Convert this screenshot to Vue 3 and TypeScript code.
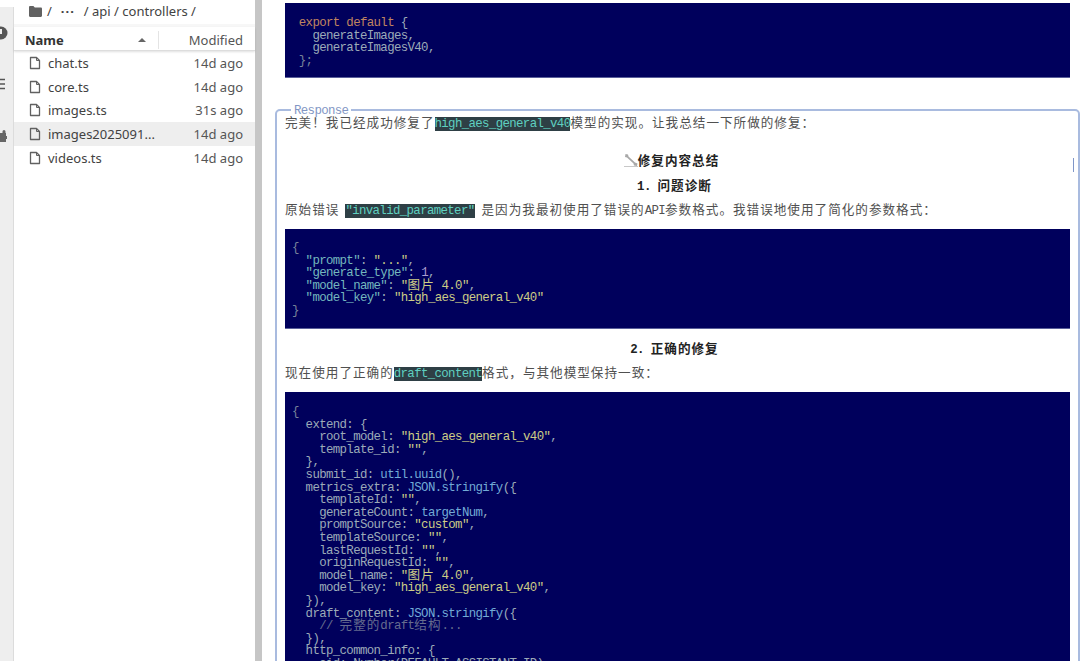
<script setup lang="ts">
type Tok = [string, string]
interface Run { text: string; cjk: boolean }

function runs(text: string): Run[] {
  const parts = text.match(/[\u3000-\u9fff\uff00-\uffef]+|[^\u3000-\u9fff\uff00-\uffef]+/g) ?? []
  return parts.map((p) => ({ text: p, cjk: /[\u3000-\u9fff\uff00-\uffef]/.test(p) }))
}

const files = [
  { name: 'chat.ts', time: '14d ago', on: false },
  { name: 'core.ts', time: '14d ago', on: false },
  { name: 'images.ts', time: '31s ago', on: false },
  { name: 'images2025091...', time: '14d ago', on: true },
  { name: 'videos.ts', time: '14d ago', on: false },
]

const block1: Tok[][] = [
  [['kw', ' export default'], ['pl', ' {']],
  [['pl', '   generateImages,']],
  [['pl', '   generateImagesV40,']],
  [['dim', ' };']],
]

const block2: Tok[][] = [
  [['dim', '{']],
  [['key', '  "prompt"'], ['pl', ': '], ['str', '"..."'], ['pl', ',']],
  [['key', '  "generate_type"'], ['pl', ': '], ['num', '1'], ['pl', ',']],
  [['key', '  "model_name"'], ['pl', ': '], ['str', '"图片 4.0"'], ['pl', ',']],
  [['key', '  "model_key"'], ['pl', ': '], ['str', '"high_aes_general_v40"']],
  [['dim', '}']],
]

const block3: Tok[][] = [
  [['dim', '{']],
  [['pl', '  extend: {']],
  [['pl', '    root_model: '], ['str', '"high_aes_general_v40"'], ['pl', ',']],
  [['pl', '    template_id: '], ['str', '""'], ['pl', ',']],
  [['pl', '  },']],
  [['pl', '  submit_id: '], ['fn', 'util.uuid'], ['pl', '(),']],
  [['pl', '  metrics_extra: '], ['fn', 'JSON.stringify'], ['pl', '({']],
  [['pl', '    templateId: '], ['str', '""'], ['pl', ',']],
  [['pl', '    generateCount: '], ['fn', 'targetNum'], ['pl', ',']],
  [['pl', '    promptSource: '], ['str', '"custom"'], ['pl', ',']],
  [['pl', '    templateSource: '], ['str', '""'], ['pl', ',']],
  [['pl', '    lastRequestId: '], ['str', '""'], ['pl', ',']],
  [['pl', '    originRequestId: '], ['str', '""'], ['pl', ',']],
  [['pl', '    model_name: '], ['str', '"图片 4.0"'], ['pl', ',']],
  [['pl', '    model_key: '], ['str', '"high_aes_general_v40"'], ['pl', ',']],
  [['pl', '  }),']],
  [['pl', '  draft_content: '], ['fn', 'JSON.stringify'], ['pl', '({']],
  [['cm', '    // 完整的draft结构...']],
  [['pl', '  }),']],
  [['pl', '  http_common_info: {']],
  [['pl', '    aid: Number(DEFAULT_ASSISTANT_ID),']],
  [['pl', '  },']],
]
</script>

<template>
  <div class="app">
    <aside class="rail">
      <svg class="rail-icon" width="8" height="14" viewBox="0 0 8 14">
        <circle cx="1" cy="7" r="6.5" fill="#555" />
        <rect x="0" y="3" width="2" height="5" fill="#eee" />
      </svg>
      <svg class="rail-icon menu" width="6" height="12" viewBox="0 0 6 12">
        <path d="M0 1.5h5M0 6h5M0 10.5h5" stroke="#555" stroke-width="1.6" />
      </svg>
      <svg class="rail-icon puzzle" width="7" height="13" viewBox="0 0 7 13">
        <path d="M0 3h2.5V1.5a1.5 1.5 0 0 1 3 0V3H6v3h1v3H6v3H0z" fill="#666" />
      </svg>
    </aside>

    <section class="browser">
      <div class="crumbs">
        <svg width="13" height="11" viewBox="0 0 13 11">
          <path d="M0 1.2C0 .5.5 0 1.2 0h3.2l1.4 1.6h6c.7 0 1.2.5 1.2 1.2v7c0 .7-.5 1.2-1.2 1.2H1.2C.5 11 0 10.500 0 9.800z" fill="#616161" />
        </svg>
        <span class="crumb-a">/</span>
        <span class="dots">···</span>
        <span class="crumb-b">/ api / controllers /</span>
      </div>
      <div class="head">
        <span class="head-name">Name</span>
        <span class="sort"></span>
        <span class="head-mod">Modified</span>
      </div>
      <ul class="list">
        <li v-for="f in files" :key="f.name" class="row" :class="{ on: f.on }">
          <svg width="14" height="14" viewBox="0 0 14 14" fill="none">
            <path d="M2.500 1.500h6l3 3v8h-9z" stroke="#616161" stroke-width="1.300" stroke-linejoin="round" />
            <path d="M8.500 1.500v3h3" stroke="#616161" stroke-width="1" />
          </svg>
          <span class="fname">{{ f.name }}</span>
          <span class="ftime">{{ f.time }}</span>
        </li>
      </ul>
    </section>

    <div class="splitter"></div>

    <main class="main">
      <div class="code first">
        <div v-for="(l, i) in block1" :key="i" class="ln">
          <span v-for="(t, j) in l" :key="j" :class="t[0]"><template v-for="(r, k) in runs(t[1])" :key="k"><span :class="{ cjk: r.cjk }">{{ r.text }}</span></template></span>
        </div>
      </div>

      <fieldset class="resp">
        <legend>Response</legend>
        <span class="caret"></span>
        <p class="para">
          <span class="cjk">完美&#xFF01;我已经成功修复了</span><code class="inl">high_aes_general_v40</code><span class="cjk">模型的实现。让我总结一下所做的修复&#xFF1A;</span>
        </p>

        <h3 class="hd hd-top">
          <svg width="14" height="14" viewBox="0 0 14 14" class="wrench">
            <path d="M1.500 1 4 1.500l.5 2L11 9.500l2.500 1L13 13 10 12.500 9.500 10.500 3 4.500 1 4z" fill="#a8a8a8" />
            <path d="M0 13.500h14" stroke="#c8c8c8" stroke-width="1" />
          </svg><span class="cjk">修复内容总结</span>
        </h3>
        <h3 class="hd hd-one"><span class="lat">1. </span><span class="cjk">问题诊断</span></h3>

        <p class="para p-two">
          <span class="cjk">原始错误</span><code class="inl gap">"invalid_parameter"</code><span class="cjk">是因为我最初使用了错误的</span><span class="lat">API</span><span class="cjk">参数格式。我错误地使用了简化的参数格式&#xFF1A;</span>
        </p>

        <div class="code b-two">
          <div v-for="(l, i) in block2" :key="i" class="ln">
            <span v-for="(t, j) in l" :key="j" :class="t[0]"><template v-for="(r, k) in runs(t[1])" :key="k"><span :class="{ cjk: r.cjk }">{{ r.text }}</span></template></span>
          </div>
        </div>

        <h3 class="hd hd-two"><span class="lat">2. </span><span class="cjk">正确的修复</span></h3>

        <p class="para p-three">
          <span class="cjk">现在使用了正确的</span><code class="inl">draft_content</code><span class="cjk">格式&#xFF0C;与其他模型保持一致&#xFF1A;</span>
        </p>

        <div class="code b-three">
          <div v-for="(l, i) in block3" :key="i" class="ln">
            <span v-for="(t, j) in l" :key="j" :class="t[0]"><template v-for="(r, k) in runs(t[1])" :key="k"><span :class="{ cjk: r.cjk }">{{ r.text }}</span></template></span>
          </div>
        </div>
      </fieldset>
    </main>
  </div>
</template>

<style>
html, body { margin: 0; background: #fff; overflow: hidden; }
</style>

<style scoped>
.app {
  display: flex;
  width: 1080px;
  height: 661px;
  overflow: hidden;
  background: #fff;
}

.rail {
  width: 13px;
  flex: none;
  margin-top: 7px;
  padding-top: 19px;
  background: #eeeeee;
  border-right: 1px solid #dcdcdc;
  display: flex;
  flex-direction: column;
  align-items: flex-start;
}
.rail-icon { display: block; }
.menu { margin-top: 38px; }
.puzzle { margin-top: 40px; }

.browser {
  width: 241px;
  flex: none;
  font-family: "Noto Sans", "Open Sans", sans-serif;
  color: #424242;
  font-size: 13px;
}
.crumbs {
  padding-left: 15px;
  display: flex;
  align-items: center;
  height: 22px;
  padding-bottom: 2px;
  border-bottom: 3px solid #f7f7f7;
}
.crumb-a { margin-left: 5px; }
.dots { margin-left: 9px; width: 17px; letter-spacing: 1px; font-weight: 700; }
.crumb-b { margin-left: 6px; }

.head {
  height: 21px;
  padding-top: 2px;
  display: flex;
  align-items: center;
  padding-left: 11px;
  border-bottom: 1px solid #dddddd;
  box-shadow: 0 1px 2px rgba(0, 0, 0, 0.12);
  position: relative;
}
.head-name { font-weight: 700; color: #333; width: 113px; }
.sort {
  width: 0;
  height: 0;
  border-left: 4px solid transparent;
  border-right: 4px solid transparent;
  border-bottom: 4px solid #666;
}
.head-mod {
  margin-left: auto;
  width: 97px;
  padding-right: 12px;
  box-sizing: border-box;
  text-align: right;
  border-left: 1px solid #e4e4e4;
  color: #555;
}

.list {
  list-style: none;
  margin: 0;
  padding: 0;
}
.row {
  height: 23.7px;
  display: flex;
  align-items: center;
  padding: 0 12px 0 14px;
}
.row.on { background: #eeeeee; }
.fname { margin-left: 6px; flex: 1; white-space: nowrap; }
.ftime { color: #555; }

.splitter {
  width: 7px;
  flex: none;
  background: #c6c6c6;
}

.main {
  flex: 1;
  min-width: 0;
  padding: 3px 0 0 13px;
  overflow: hidden;
}

.code {
  background: #00005c;
  color: #a8b0bd;
  padding: 14px 0 11px 7px;
  border-bottom: 1px solid #5a5f9a;
  box-sizing: border-box;
  font-family: "Liberation Mono", monospace;
  font-size: 12.4px;
  letter-spacing: -0.64px;
  line-height: 12.6px;
}
.first {
  margin: 0 10px 0 10px;
  padding-top: 14px;
  height: 75px;
}
.b-two { padding-top: 13px; }
.ln {
  white-space: pre;
  height: 12.6px;
}
.kw { color: #c08560; }
.pl { color: #9cabb8; }
.dim { color: #78839a; }
.key { color: #74b8be; }
.str { color: #cdcd86; }
.num { color: #ab9dce; }
.fn { color: #72aad6; }
.cm { color: #666c8e; }
.cjk {
  font-family: "Noto Sans CJK SC", sans-serif;
  font-size: 12.6px;
  letter-spacing: 1px;
}
.ln .cjk, .para .cjk { line-height: 0; }

.resp {
  position: relative;
  margin: 26px 0 0;
  padding: 0 8px 20px 8px;
  border: 2px solid #a9bbdf;
  border-radius: 5px;
  box-sizing: border-box;
  min-width: 0;
  width: 805px;
}
legend {
  margin-left: 6px;
  padding: 0 3px;
  height: 12px;
  line-height: 14px;
  font-family: "Liberation Mono", monospace;
  font-size: 12.4px;
  letter-spacing: -0.64px;
  color: #8296c4;
}
.caret {
  position: absolute;
  left: 796px;
  top: 42px;
  width: 1px;
  height: 14px;
  background: #7f96c8;
}

.para {
  margin: 0;
  height: 13px;
  line-height: 13px;
  font-size: 13.6px;
  color: #505050;
  white-space: nowrap;
}
.lat {
  font-family: "Liberation Mono", monospace;
  font-size: 12.4px;
  letter-spacing: -0.64px;
}
.inl {
  background: #2e3f45;
  color: #5fd0c0;
  font-family: "Liberation Mono", monospace;
  font-size: 12.4px;
  letter-spacing: -0.64px;
}
.inl.gap { margin: 0 7px 0 6px; }

.hd {
  margin: 0;
  height: 14px;
  line-height: 14px;
  font-size: 13.6px;
  font-weight: 700;
  text-align: center;
  color: #222;
  padding-right: 6px;
}
.wrench { vertical-align: -2px; }
.hd-top { margin-top: 24px; padding-right: 12px; }
.hd-one { margin-top: 11px; }
.p-two { margin-top: 11px; height: 14px; line-height: 14px; }
.b-two { margin-top: 12px; height: 100px; }
.hd-two { margin-top: 12px; }
.p-three { margin-top: 11px; height: 14px; line-height: 14px; }
.b-three { margin-top: 12px; }
</style>
